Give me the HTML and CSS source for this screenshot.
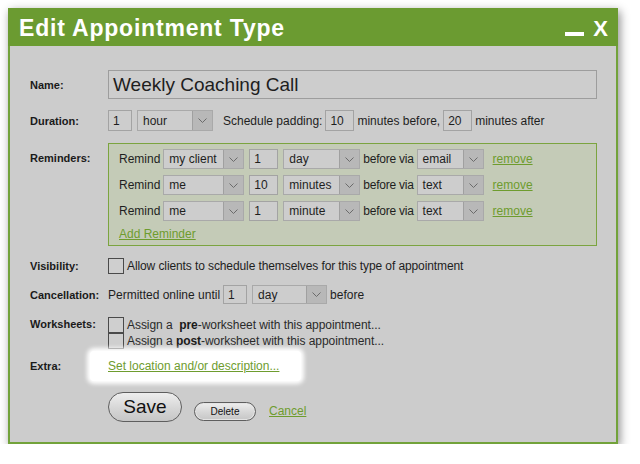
FILE: index.html
```html
<!DOCTYPE html>
<html>
<head>
<meta charset="utf-8">
<link rel="stylesheet" href="styles.css">
</head>
<body>
<div class="dialog">
  <div class="header">
    <h1 class="title">Edit Appointment Type</h1>
    <div class="controls"><span class="minimize"></span><span class="close">X</span></div>
  </div>
  <div class="form">
    <div class="row row-name">
      <div class="label">Name:</div>
      <div class="content"><span class="input input-name">Weekly Coaching Call</span></div>
    </div>
    <div class="row row-duration">
      <div class="label">Duration:</div>
      <div class="content">
        <span class="input w24">1</span>
        <span class="select w76"><span class="val">hour</span><span class="arrow"><svg width="9" height="5" viewBox="0 0 9 5"><path d="M0.5 0.5 L4.5 4.5 L8.5 0.5" fill="none" stroke="#6b6b6b" stroke-width="1"/></svg></span></span>
        <span class="text ml10">Schedule padding:</span>
        <span class="input w29">10</span>
        <span class="text">minutes before,</span>
        <span class="input w29">20</span>
        <span class="text">minutes after</span>
      </div>
    </div>
    <div class="row row-reminders">
      <div class="label label-top">Reminders:</div>
      <div class="content">
        <div class="reminders">
          <div class="rem-row">
            <span class="text">Remind</span>
            <span class="select w81"><span class="val">my client</span><span class="arrow"><svg width="9" height="5" viewBox="0 0 9 5"><path d="M0.5 0.5 L4.5 4.5 L8.5 0.5" fill="none" stroke="#6b6b6b" stroke-width="1"/></svg></span></span>
            <span class="input w29 ml2">1</span>
            <span class="select w77 ml2"><span class="val">day</span><span class="arrow"><svg width="9" height="5" viewBox="0 0 9 5"><path d="M0.5 0.5 L4.5 4.5 L8.5 0.5" fill="none" stroke="#6b6b6b" stroke-width="1"/></svg></span></span>
            <span class="text tight">before via</span>
            <span class="select w67"><span class="val">email</span><span class="arrow"><svg width="9" height="5" viewBox="0 0 9 5"><path d="M0.5 0.5 L4.5 4.5 L8.5 0.5" fill="none" stroke="#6b6b6b" stroke-width="1"/></svg></span></span>
            <a class="link ml6" href="#">remove</a>
          </div>
          <div class="rem-row">
            <span class="text">Remind</span>
            <span class="select w81"><span class="val">me</span><span class="arrow"><svg width="9" height="5" viewBox="0 0 9 5"><path d="M0.5 0.5 L4.5 4.5 L8.5 0.5" fill="none" stroke="#6b6b6b" stroke-width="1"/></svg></span></span>
            <span class="input w29 ml2">10</span>
            <span class="select w77 ml2"><span class="val">minutes</span><span class="arrow"><svg width="9" height="5" viewBox="0 0 9 5"><path d="M0.5 0.5 L4.5 4.5 L8.5 0.5" fill="none" stroke="#6b6b6b" stroke-width="1"/></svg></span></span>
            <span class="text tight">before via</span>
            <span class="select w67"><span class="val">text</span><span class="arrow"><svg width="9" height="5" viewBox="0 0 9 5"><path d="M0.5 0.5 L4.5 4.5 L8.5 0.5" fill="none" stroke="#6b6b6b" stroke-width="1"/></svg></span></span>
            <a class="link ml6" href="#">remove</a>
          </div>
          <div class="rem-row">
            <span class="text">Remind</span>
            <span class="select w81"><span class="val">me</span><span class="arrow"><svg width="9" height="5" viewBox="0 0 9 5"><path d="M0.5 0.5 L4.5 4.5 L8.5 0.5" fill="none" stroke="#6b6b6b" stroke-width="1"/></svg></span></span>
            <span class="input w29 ml2">1</span>
            <span class="select w77 ml2"><span class="val">minute</span><span class="arrow"><svg width="9" height="5" viewBox="0 0 9 5"><path d="M0.5 0.5 L4.5 4.5 L8.5 0.5" fill="none" stroke="#6b6b6b" stroke-width="1"/></svg></span></span>
            <span class="text tight">before via</span>
            <span class="select w67"><span class="val">text</span><span class="arrow"><svg width="9" height="5" viewBox="0 0 9 5"><path d="M0.5 0.5 L4.5 4.5 L8.5 0.5" fill="none" stroke="#6b6b6b" stroke-width="1"/></svg></span></span>
            <a class="link ml6" href="#">remove</a>
          </div>
          <a class="link add" href="#">Add Reminder</a>
        </div>
      </div>
    </div>
    <div class="row row-visibility">
      <div class="label">Visibility:</div>
      <div class="content">
        <span class="checkbox"></span>
        <span class="text vis">Allow clients to schedule themselves for this type of appointment</span>
      </div>
    </div>
    <div class="row row-cancel">
      <div class="label">Cancellation:</div>
      <div class="content">
        <span class="text">Permitted online until</span>
        <span class="input w24">1</span>
        <span class="select w75"><span class="val">day</span><span class="arrow"><svg width="9" height="5" viewBox="0 0 9 5"><path d="M0.5 0.5 L4.5 4.5 L8.5 0.5" fill="none" stroke="#6b6b6b" stroke-width="1"/></svg></span></span>
        <span class="text">before</span>
      </div>
    </div>
    <div class="row row-worksheets">
      <div class="label label-ws">Worksheets:</div>
      <div class="content col">
        <div class="ws-line"><span class="checkbox"></span><span class="text small">Assign a&nbsp; <b>pre</b>-worksheet with this appointment...</span></div>
        <div class="ws-line"><span class="checkbox"></span><span class="text small">Assign a <b>post</b>-worksheet with this appointment...</span></div>
      </div>
    </div>
    <div class="row row-extra">
      <div class="label">Extra:</div>
      <div class="content">
        <div class="highlight"><a class="link" href="#">Set location and/or description...</a></div>
      </div>
    </div>
    <div class="row row-buttons">
      <div class="label"></div>
      <div class="content">
        <button class="btn btn-save">Save</button>
        <button class="btn btn-delete">Delete</button>
        <a class="link" href="#">Cancel</a>
      </div>
    </div>
  </div>
</div>
</body>
</html>
```
FILE: styles.css
```css
html, body {
  margin: 0;
  padding: 0;
  background: #ffffff;
}
body {
  font-family: "Liberation Sans", Arial, sans-serif;
  font-size: 12px;
  color: #1e1e1e;
}
.dialog {
  margin: 8px 0 0 8px;
  width: 606px;
  height: 434px;
  background: #cccccc;
  border: 2px solid #72a23a;
  border-top: 0;
  box-shadow: 2px 3px 9px rgba(0, 0, 0, 0.45);
}
.header {
  height: 38px;
  margin: 0 -2px;
  background: #6b9b31;
  display: flex;
  align-items: center;
  justify-content: space-between;
  padding: 0 10px 0 11px;
}
.title {
  margin: 0;
  color: #ffffff;
  font-size: 23px;
  font-weight: bold;
  letter-spacing: 0.8px;
  padding-top: 3px;
}
.controls {
  display: flex;
  align-items: flex-end;
  gap: 9px;
  padding-top: 3px;
}
.minimize {
  width: 19px;
  height: 4px;
  background: #ffffff;
  margin-bottom: 4px;
}
.close {
  color: #ffffff;
  font-weight: bold;
  font-size: 22px;
  line-height: 22px;
}
.form {
  padding: 24px 0 0 20px;
}
.row {
  display: flex;
  align-items: center;
}
.label {
  width: 78px;
  flex: none;
  font-weight: bold;
  font-size: 11px;
  color: #1a1a1a;
}
.content {
  display: flex;
  align-items: center;
}
.content.col {
  flex-direction: column;
  align-items: flex-start;
}
.text {
  margin: 0 3px;
  white-space: nowrap;
}
.text.tight { margin: 0 3px 0 3px; letter-spacing: -0.25px; }
.text.vis { letter-spacing: -0.1px; }
.ml10 { margin-left: 10px; }
.ml2 { margin-left: 5px; }
.ml6 { margin-left: 9px; }
.input {
  box-sizing: border-box;
  height: 21px;
  border: 1px solid #a3a3a3;
  background: #cdcdcd;
  padding: 0 4px;
  display: flex;
  align-items: center;
  font-size: 12px;
}
.input-name {
  width: 489px;
  height: 29px;
  font-size: 19px;
  padding-left: 4px;
  border-color: #9d9d9d;
}
.w24 { width: 24px; }
.w29 { width: 29px; }
.select {
  box-sizing: border-box;
  height: 21px;
  border: 1px solid #a9a9a9;
  background: #cdcdcd;
  display: flex;
  align-items: stretch;
  margin-left: 5px;
}
.select .val {
  flex: 1;
  padding-left: 5px;
  display: flex;
  align-items: center;
  white-space: nowrap;
  overflow: hidden;
}
.select .arrow {
  width: 19px;
  background: #b8b8b8;
  border-left: 1px solid #a0a0a0;
  display: flex;
  align-items: center;
  justify-content: center;
}
.w75 { width: 75px; }
.w76 { width: 76px; }
.w77 { width: 77px; }
.w81 { width: 81px; }
.w67 { width: 67px; }
.row-duration { margin-top: 11px; }
.row-reminders { margin-top: 12px; align-items: flex-start; }
.label-top { padding-top: 9px; }
.reminders {
  box-sizing: border-box;
  width: 489px;
  height: 103px;
  border: 1px solid #7ba43f;
  background: #c4cbb7;
  padding: 5px 0 0 7px;
}
.rem-row {
  display: flex;
  align-items: center;
  height: 20px;
  margin-bottom: 6px;
}
.rem-row .select, .rem-row .input { height: 20px; }
.rem-row > .select { margin-left: 0; }
.rem-row > .ml2 { margin-left: 5px; }
.link {
  color: #6e9c2e;
  text-decoration: underline;
  font-size: 12px;
  white-space: nowrap;
}
.add {
  display: block;
  margin: 2px 0 0 3px;
}
.row-visibility { margin-top: 12px; height: 16px; }
.checkbox {
  box-sizing: border-box;
  width: 16px;
  height: 16px;
  border: 1px solid #4a4a4a;
  background: #cfcfcf;
  flex: none;
}
.row-visibility .text { margin-left: 3px; }
.row-cancel { margin-top: 11px; height: 19px; }
.row-cancel .input, .row-cancel .select { height: 19px; }
.row-cancel .text:first-child { margin-left: 0; }
.row-cancel .select { margin-left: 5px; }
.row-worksheets { margin-top: 13px; align-items: flex-start; }
.label-ws { padding-top: 1px; }
.ws-line {
  display: flex;
  align-items: center;
  height: 16px;
}
.small { font-size: 12px; color: #2a2a2a; margin-left: 3px; letter-spacing: -0.05px; }
.small b { color: #1a1a1a; }
.row-extra { margin-top: 1px; height: 32px; }
.highlight {
  margin-left: -18px;
  padding: 0 22px 0 18px;
  height: 30px;
  display: flex;
  align-items: center;
  background: #ffffff;
  box-shadow: 0 0 4px 3px #ffffff;
  border-radius: 4px;
}
.row-buttons { margin-top: 10px; }
.btn {
  font-family: "Liberation Sans", Arial, sans-serif;
  box-sizing: border-box;
  border: 1px solid #5e5e5e;
  border-radius: 16px;
  background: linear-gradient(#eeeeee, #d6d6d6 55%, #c6c6c6);
  color: #111111;
  padding: 0;
  cursor: pointer;
}
.btn-save {
  width: 74px;
  height: 30px;
  font-size: 19px;
  line-height: 26px;
}
.btn-delete {
  width: 62px;
  height: 19px;
  font-size: 10px;
  margin-left: 12px;
  margin-top: 8px;
  box-shadow: inset 0 0 0 1px #e4e4e4;
}
.row-buttons .link { margin-left: 13px; margin-top: 8px; }
```
